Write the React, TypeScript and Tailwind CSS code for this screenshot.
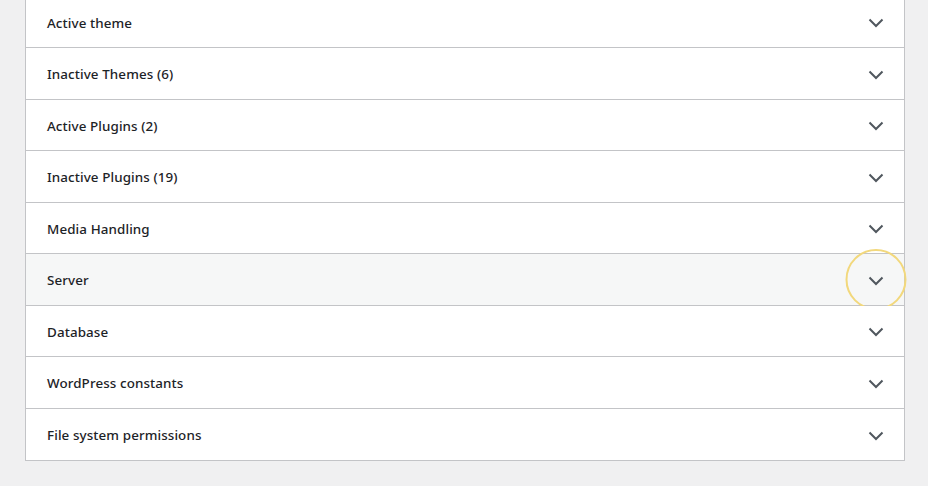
const sections = [
  "Active theme",
  "Inactive Themes (6)",
  "Active Plugins (2)",
  "Inactive Plugins (19)",
  "Media Handling",
  "Server",
  "Database",
  "WordPress constants",
  "File system permissions",
]

function Row({ title, hovered }: { title: string; hovered?: boolean }) {
  return (
    <div
      className={
        "relative flex h-[51.5px] items-center justify-between border-b border-[#c3c4c7] pl-[21px] pr-[18px] last:border-b-0 " +
        (hovered ? "bg-[#f6f7f7]" : "bg-white")
      }
    >
      <span className="mt-[2px] text-[13.4px] font-medium tracking-[0.1px] text-[#1d2327]">{title}</span>
      <span className="relative mt-[3px] flex h-5 w-5 items-center justify-center">
        <svg width="16" height="10" viewBox="0 0 16 10" fill="none">
          <path d="M1.5 1.5 L8 8 L14.5 1.5" stroke="#50575e" strokeWidth="2" />
        </svg>
        {hovered && (
          <span className="pointer-events-none absolute left-1/2 top-1/2 h-[61px] w-[61px] -translate-x-1/2 -translate-y-[calc(50%+1.5px)] rounded-full border-2 border-[#f2d87c]" />
        )}
      </span>
    </div>
  )
}

export default function App() {
  return (
    <div
      className="h-[486px] w-[928px] overflow-hidden bg-[#f0f0f1] pl-[25px] pr-[23px]"
      style={{ fontFamily: '"Noto Sans", "Open Sans", sans-serif' }}
    >
      <div className="-mt-[3.5px] w-[880px] border-x border-b border-[#c3c4c7] bg-white">
        {sections.map((s) => (
          <Row key={s} title={s} hovered={s === "Server"} />
        ))}
      </div>
    </div>
  )
}
